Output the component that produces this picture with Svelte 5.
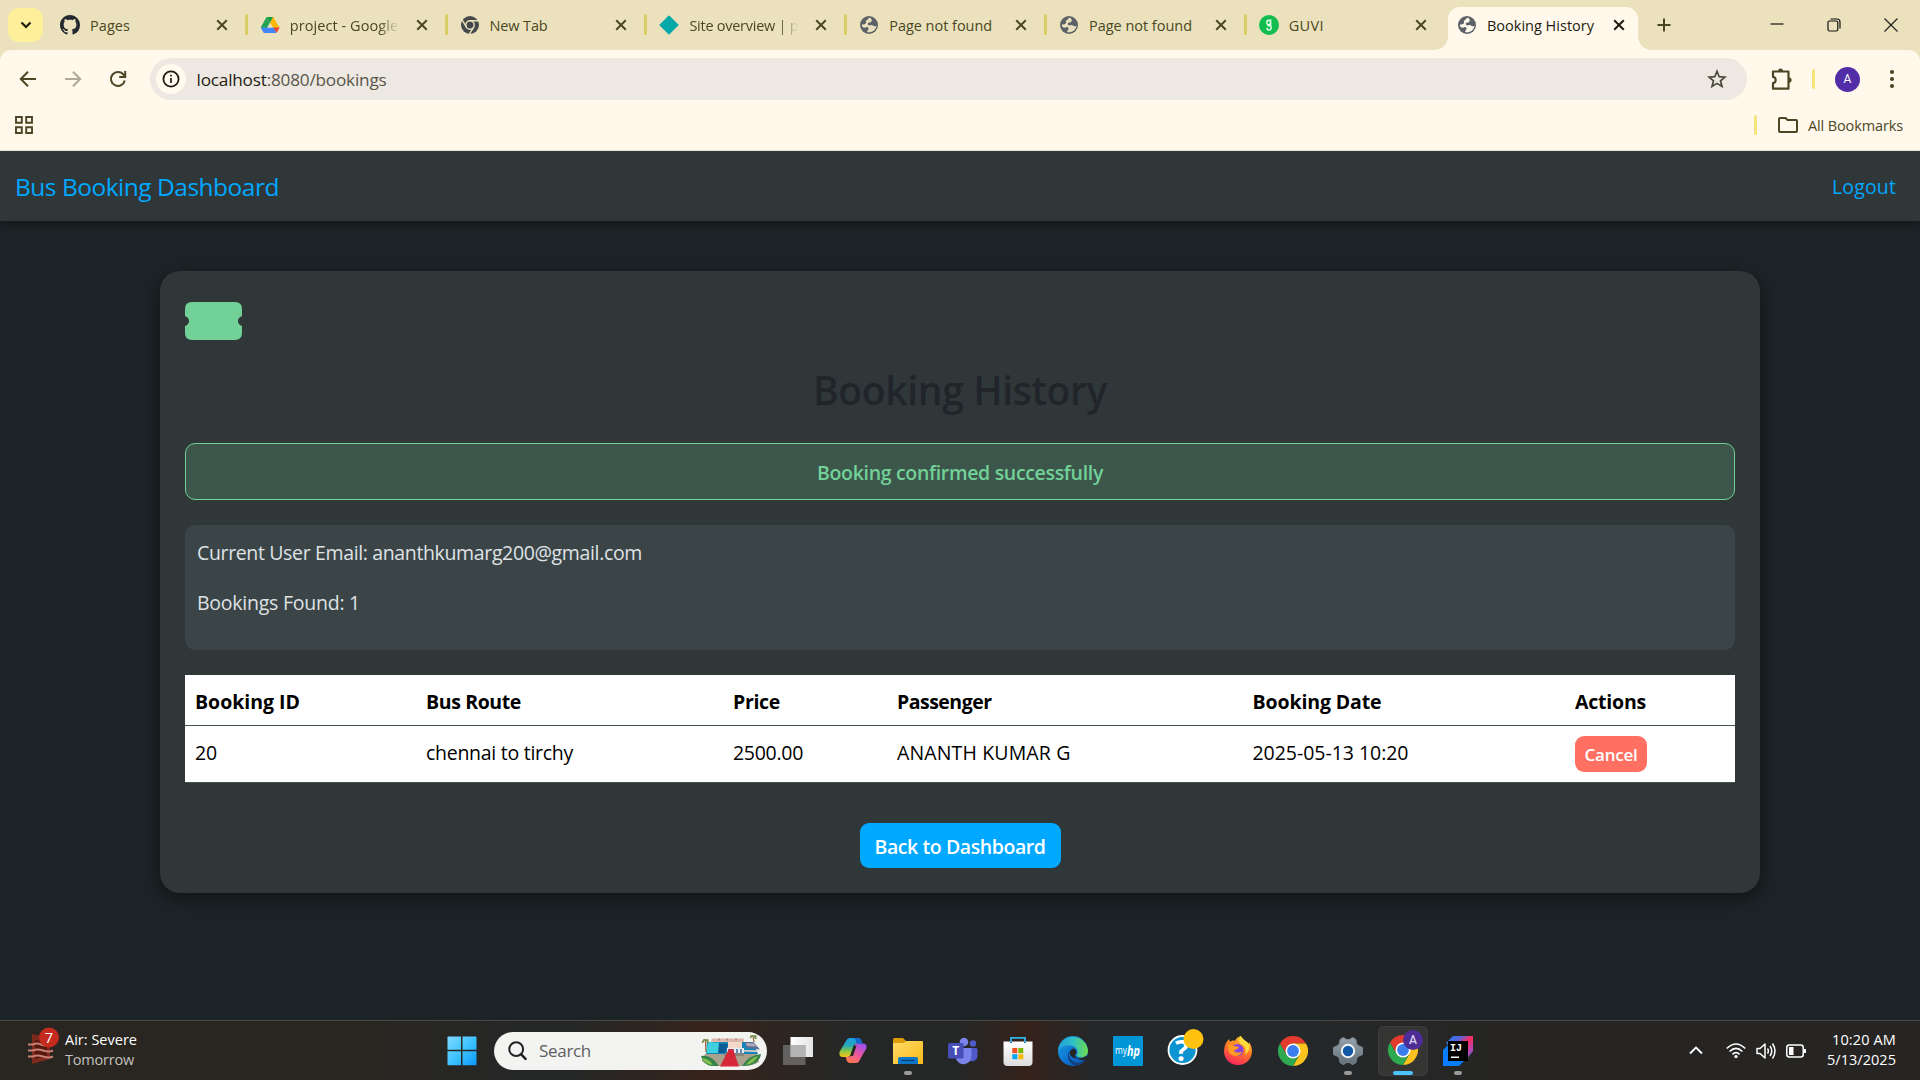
<script>
  const tabs = [
    { icon: 'github', title: 'Pages', width: 40 },
    { icon: 'drive', title: 'project - Google Drive', width: 148, fade: true },
    { icon: 'chromeMono', title: 'New Tab', width: 58 },
    { icon: 'diamond', title: 'Site overview | project', width: 146, fade: true },
    { icon: 'globe', title: 'Page not found', width: 103 },
    { icon: 'globe', title: 'Page not found', width: 103 },
    { icon: 'guvi', title: 'GUVI', width: 35 },
    { icon: 'globe', title: 'Booking History', width: 107, active: true }
  ];

  const columns = [
    { label: 'Booking ID', width: 105 },
    { label: 'Bus Route', width: 95 },
    { label: 'Price', width: 47 },
    { label: 'Passenger', width: 94.5 },
    { label: 'Booking Date', width: 129 },
    { label: 'Actions', width: 71 }
  ];
  const booking = [
    { value: '20', width: 22 },
    { value: 'chennai to tirchy', width: 147 },
    { value: '2500.00', width: 70 },
    { value: 'ANANTH KUMAR G', width: 173.5 },
    { value: '2025-05-13 10:20', width: 156 }
  ];

  const apps = [
    { icon: 'taskview' },
    { icon: 'copilot' },
    { icon: 'explorer', open: true },
    { icon: 'teams' },
    { icon: 'store' },
    { icon: 'edge' },
    { icon: 'myhp' },
    { icon: 'help' },
    { icon: 'firefox' },
    { icon: 'chrome' },
    { icon: 'settings', open: true },
    { icon: 'chromeProfile', focused: true },
    { icon: 'intellij', open: true }
  ];

  // Spreads letter spacing so that the label takes the given width.
  function fit(node, width) {
    const natural = node.getBoundingClientRect().width;
    node.style.letterSpacing = `${(width - natural) / node.textContent.length}px`;
  }
</script>

{#snippet chromeDisc()}
  <path fill="#e33b2e" d="M2 7.500A15 15 0 0 1 28 7.500H15L8.500 18.800z" />
  <path fill="#fcc31e" d="M15 7.500H28A15 15 0 0 1 15 30L21.500 18.800z" />
  <path fill="#2da94f" d="M15 30A15 15 0 0 1 2 7.500L8.500 18.800 15 22.500 21 19z" />
  <circle cx="15" cy="15" r="7.500" fill="#fff" />
  <circle cx="15" cy="15" r="5.900" fill="#3b7ded" />
{/snippet}

{#snippet favicon(name)}
  {#if name === 'github'}
    <svg width="20" height="20" viewBox="0 0 16 16"><path fill="#24292f" d="M8 0C3.580 0 0 3.580 0 8c0 3.540 2.290 6.530 5.470 7.590.4.070.55-.17.55-.38 0-.19-.01-.82-.01-1.490-2.010.37-2.530-.49-2.690-.94-.09-.23-.48-.94-.82-1.130-.28-.15-.68-.52-.01-.53.63-.01 1.080.58 1.230.82.72 1.210 1.870.87 2.330.66.070-.52.28-.87.51-1.070-1.780-.2-3.640-.89-3.640-3.950 0-.87.31-1.590.82-2.150-.08-.2-.36-1.020.08-2.120 0 0 .67-.21 2.200.82.64-.18 1.320-.27 2-.27s1.360.09 2 .27c1.530-1.040 2.200-.82 2.200-.82.44 1.100.16 1.920.08 2.120.51.56.82 1.270.82 2.150 0 3.070-1.870 3.750-3.650 3.950.29.25.54.73.54 1.480 0 1.070-.01 1.930-.01 2.200 0 .21.15.46.55.38A8.010 8.010 0 0 0 16 8c0-4.420-3.580-8-8-8z" /></svg>
  {:else if name === 'drive'}
    <svg width="20" height="20" viewBox="0 0 20 20">
      <path fill="#0f9d47" d="M6.600 2h6.800L10 8z" />
      <path fill="#23a455" d="M6.600 2 10 8 4.200 18 .8 12.300z" />
      <path fill="#fbb904" d="M13.400 2H13L10 8l3 5h6.600z" />
      <path fill="#ea4335" d="M13 12.500h6.700L16.500 18z" />
      <path fill="#4285f4" d="M.8 12.500h12.800L16.300 18H3.900z" />
      <path fill="#ebe2bd" d="m10 7.800 2.800 4.700H7.200z" />
    </svg>
  {:else if name === 'chromeMono'}
    <svg width="20" height="20" viewBox="0 0 20 20">
      <circle cx="10" cy="10" r="9" fill="#46494c" />
      <g fill="none" stroke="#ebe2bd" stroke-width="1.400">
        <circle cx="10" cy="10" r="4.200" />
        <path d="M10 5.800h8.500M6.400 12.100 2.100 4.800M13.600 12.100 9.300 19.300" />
      </g>
    </svg>
  {:else if name === 'diamond'}
    <svg width="20" height="20" viewBox="0 0 20 20"><path d="M10 1.200 18.800 10 10 18.800 1.200 10z" fill="#05a8a8" stroke="#05a8a8" stroke-width="1.500" stroke-linejoin="round" /></svg>
  {:else if name === 'globe'}
    <svg width="20" height="20" viewBox="0 0 20 20">
      <circle cx="10" cy="10" r="9" fill="#5d6268" />
      <path class="land" d="M10.800 2.800C8.300 3.600 8.900 5.500 6.800 5.700 7.800 8 6.500 8.800 5.200 9.300L2.700 9.700C3 12 5 13.300 6.700 12.400c2-1 3.300.2 2.700 1.800-.4 1.300-1.700 1.500-1.100 2.600.5.600 1.700.7 2.400.5 3.700-.5 6.300-3 6.800-6.500-2 1.300-3-.2-4.200-.6-1.900-.5-2.700.7-4.100-.1-1-.8-.5-2.300 1.200-2.500 1.500-.1 1.400-1.200 2.400-1.700.3-.8-.6-2.600-2-3.100z" />
    </svg>
  {:else}
    <svg width="20" height="20" viewBox="0 0 20 20">
      <circle cx="10" cy="10" r="10" fill="#13bd50" />
      <g fill="none" stroke="#e9ffef" stroke-width="1.400"><ellipse cx="9.700" cy="7.400" rx="1.900" ry="2.200" /><path d="M11.300 5.600 12.300 4.500M8.200 10.500h2.200a2.100 2.300 0 1 1-2.400 2.400M11.600 7v5" /></g>
    </svg>
  {/if}
{/snippet}

{#snippet appIcon(name)}
  {#if name === 'taskview'}
    <svg width="30" height="30" viewBox="0 0 30 30">
      <path d="M7.500 1H30v20H7.500z" fill="url(#tv)" />
      <path d="M0 9h22.500v20H0z" fill="#777" opacity=".75" />
      <path d="M7.500 9h15v12h-15z" fill="#b4b4b4" />
    </svg>
  {:else if name === 'copilot'}
    <svg width="30" height="30" viewBox="0 0 30 30">
      <path fill="url(#cpA)" d="M8 5C9 3 10 2 12 2h8c2 0 3 1.500 3.500 3l.7 2.500H19c-2 0-3 1-3.500 3L13 18c-.7 2-1.500 3-4 3H4.500C1.500 21 1 18 1.700 15.500z" />
      <path fill="url(#cpB)" d="M22 23.500c-1 2.500-2 3.500-4 3.500h-6c-2 0-3-1.500-3.500-3l-.9-3H10c2.200 0 3.300-1.500 4-4l2-6.500C16.700 8 17.500 7.500 19.500 7.500H25c3.500 0 4 2.500 3.300 5z" />
      <path fill="#262626" d="m15.800 9.500 2.700.2L15 20h-3z" />
      <path fill="#1467cf" d="M16 2h4c2 0 3 1.500 3.500 3l.7 2.500h-5.700C18 5 17.500 3 16 2z" />
    </svg>
  {:else if name === 'explorer'}
    <svg width="30" height="30" viewBox="0 0 30 30">
      <path fill="#e09b08" d="M0 3.500Q0 2 1.500 2H10l3 3v4H0z" />
      <path fill="url(#fold)" d="M0 7h10.500l3-2H29q1 0 1 1v22H0z" />
      <path fill="#0d76c8" d="M5 28v-5q0-2 2-2h16q2 0 2 2v5z" />
      <path stroke="#063f77" stroke-width="1.200" d="M8.500 24.500h13" />
    </svg>
  {:else if name === 'teams'}
    <svg width="30" height="30" viewBox="0 0 30 30">
      <circle cx="25" cy="7.500" r="3.200" fill="#5059c9" />
      <path fill="#5059c9" d="M20 12h8q1.500 0 1.500 1.500V20a5.500 5.500 0 0 1-9.500 3.500z" />
      <circle cx="16" cy="6" r="4.300" fill="#7b83eb" />
      <path fill="#7b83eb" d="M9 12h13q1.500 0 1.500 1.500V20a8 8 0 0 1-15.500 3z" />
      <rect x="0" y="7" width="15.500" height="15.500" rx="1.500" fill="#464eb8" />
      <text x="7.700" y="19" text-anchor="middle" class="glyph teams">T</text>
    </svg>
  {:else if name === 'store'}
    <svg width="30" height="30" viewBox="0 0 30 30">
      <path d="M8 6.500V1.800h14v4.700" fill="none" stroke="#2fb4ea" stroke-width="1.800" />
      <path fill="url(#bag)" d="M.5 5.500h29V26q0 4-4 4h-21q-4 0-4-4z" />
      <path d="M8 5.500v1.500M22 5.500v1.500" stroke="#1673a8" stroke-width="1.800" />
      <path fill="#f25022" d="M9.300 12h5v5.200h-5z" /><path fill="#7fba00" d="M15.300 12h5v5.200h-5z" />
      <path fill="#00a4ef" d="M9.300 18.200h5v5h-5z" /><path fill="#ffb900" d="M15.300 18.200h5v5h-5z" />
    </svg>
  {:else if name === 'edge'}
    <svg width="30" height="30" viewBox="0 0 30 30">
      <circle cx="15" cy="15" r="15" fill="url(#edA)" />
      <path fill="url(#edB)" d="M.8 11A15 15 0 0 1 30 15c0 4-3 6.500-6.500 6.500-3.500 0-5.500-1.500-5-2.700 2-2 1.500-8-5-9C8 9 3 10 .3 15z" />
      <path fill="#153f7a" d="M12.300 14c-3 5 0 11.500 6 12.500 3.800.5 7-.5 10-3A15 15 0 0 1 18 29.700C11 28 7 20 12.300 14z" />
      <path fill="#262626" d="M15 12.500c-3 1-4.300 4.500-2 7.500 3 3.500 10 3.300 14 .5q2-.5 2.500 0L28 23.500q-3 1-5 .5-4-.5-6-4c-.4-.5-.1-1 .5-1.500 1.700-2 1-5.500-2.500-6z" />
    </svg>
  {:else if name === 'myhp'}
    <svg width="30" height="30" viewBox="0 0 30 30">
      <rect width="30" height="30" rx="1" fill="#0096d6" />
      <text x="2" y="18" class="glyph my" textLength="12" lengthAdjust="spacingAndGlyphs">my</text>
      <text x="14" y="19.500" class="glyph hp" textLength="13" lengthAdjust="spacingAndGlyphs">hp</text>
    </svg>
  {:else if name === 'help'}
    <svg width="37" height="37" viewBox="0 0 37 37">
      <circle cx="15.500" cy="21" r="14" fill="#0b94d0" stroke="#fff" stroke-width="1.800" />
      <text x="15" y="31.500" text-anchor="middle" class="glyph question">?</text>
      <circle cx="26.500" cy="10" r="10" fill="#ffc20e" />
    </svg>
  {:else if name === 'firefox'}
    <svg width="30" height="30" viewBox="0 0 30 30">
      <path fill="url(#ff)" d="M15 29C7 29 1 23 1 15 1 10 3 6 6 3l1 3c1-1 3-2 5-1 1-2 2-4 6-5 0 4 5 4 7 9 1-1 1-2 1-3 2 3 3 6 3 9 0 8-6 14-14 14z" />
      <path fill="#ffdc3e" d="M18 0c-3 3-3 6 0 8 4 2 6 6 4 11 5-4 5-8 4-11-2-3-6-4-8-8z" />
      <circle cx="14.500" cy="14" r="6" fill="#8445df" />
      <path fill="#ff9a22" d="M5 9c3-1 5 0 6 1l5 1c-1 3-4 2-5 4 2 2 6 2 8 0-1 6-10 7-13 1-1-2-1-4-1-7z" />
    </svg>
  {:else if name === 'chrome'}
    <svg width="30" height="30" viewBox="0 0 30 30">{@render chromeDisc()}</svg>
  {:else if name === 'settings'}
    <svg width="30" height="30" viewBox="0 0 30 30">
      <path fill="url(#gear)" stroke="#7d8994" stroke-linejoin="round" d="m10.500 1.500 3 2h3l3-2 3.500 2 .3 3.500 1.700 2.500 4.500 2v7l-4.500 2-1.700 2.500-.3 3.500-3.500 2-3-2h-3l-3 2-3.500-2-.3-3.500L5 20.500.5 18.500v-7L5 9.500 6.700 7 7 3.500z" />
      <circle cx="15" cy="15" r="6.200" fill="#115aa8" stroke="#f5f5f5" stroke-width="2" />
    </svg>
  {:else if name === 'chromeProfile'}
    <svg width="36" height="36" viewBox="0 0 36 36">
      <g transform="translate(1 5)">{@render chromeDisc()}</g>
      <circle cx="26" cy="10" r="10" fill="#4e2c96" />
      <text x="26" y="14" text-anchor="middle" class="glyph badge">A</text>
    </svg>
  {:else}
    <svg width="30" height="30" viewBox="0 0 30 30">
      <path fill="#087cfa" d="M0 14 5 9 21 25l-5 5H0z" />
      <path fill="url(#ij)" d="M3 7 10 0h20v15l-8 10z" />
      <path fill="#000" d="M5 5h20v20H5z" />
      <text x="7" y="15.300" class="glyph ij">IJ</text>
      <path fill="#fff" d="M8 20.500h8v1.500H8z" />
    </svg>
  {/if}
{/snippet}

<svg class="defs" width="0" height="0" aria-hidden="true">
  <defs>
    <linearGradient id="tv"><stop stop-color="#fff" /><stop offset="1" stop-color="#e4e4e4" /></linearGradient>
    <linearGradient id="cpA" x2="0" y2="1"><stop stop-color="#1b9de8" /><stop offset=".4" stop-color="#27a9b8" /><stop offset=".7" stop-color="#8fc73f" /><stop offset="1" stop-color="#fbc417" /></linearGradient>
    <linearGradient id="cpB" x1=".8" x2=".2" y2="1"><stop stop-color="#9a50f2" /><stop offset=".5" stop-color="#e9569d" /><stop offset="1" stop-color="#ff7a4a" /></linearGradient>
    <linearGradient id="fold" x2="1" y2="1"><stop stop-color="#ffdc68" /><stop offset="1" stop-color="#fbb917" /></linearGradient>
    <linearGradient id="bag" x2="0" y2="1"><stop stop-color="#fff" /><stop offset="1" stop-color="#dcdcdc" /></linearGradient>
    <linearGradient id="edA" x2="1" y2="1"><stop stop-color="#1ba0e0" /><stop offset=".6" stop-color="#0c6fd0" /><stop offset="1" stop-color="#0c4a96" /></linearGradient>
    <linearGradient id="edB"><stop stop-color="#1f9ede" /><stop offset=".5" stop-color="#31c0c6" /><stop offset="1" stop-color="#6cdc4c" /></linearGradient>
    <linearGradient id="ff" x1=".7" x2=".3" y2="1"><stop stop-color="#ffc92e" /><stop offset=".45" stop-color="#ff7a26" /><stop offset="1" stop-color="#f5225e" /></linearGradient>
    <linearGradient id="gear" x2="0" y2="1"><stop stop-color="#96a1aa" /><stop offset="1" stop-color="#626f7a" /></linearGradient>
    <linearGradient id="ij" x2="1" y2="1"><stop stop-color="#1180f8" /><stop offset=".3" stop-color="#5f62d8" /><stop offset=".5" stop-color="#ff2a5c" /><stop offset=".75" stop-color="#b348b8" /><stop offset="1" stop-color="#3f6cf0" /></linearGradient>
    <linearGradient id="win" x2="1" y2="1"><stop stop-color="#80dbff" /><stop offset=".5" stop-color="#3fc3ff" /><stop offset="1" stop-color="#0a98f8" /></linearGradient>
  </defs>
</svg>

<div class="screen">
  <header class="strip">
    <button class="search-tabs" aria-label="Search tabs">
      <svg width="12" height="8" viewBox="0 0 12 8"><path d="m1.500 1.500 4.500 4.500 4.500-4.500" fill="none" stroke="#1e1c0c" stroke-width="2.200" /></svg>
    </button>
    <div class="tabs">
      {#each tabs as tab, i}
        <div class="tab" class:active={tab.active} class:divided={i > 0 && !tab.active}>
          {@render favicon(tab.icon)}
          <div class="title" class:fade={tab.fade}><span use:fit={tab.width}>{tab.title}</span></div>
          <svg width="12" height="12" viewBox="0 0 12 12"><path d="m1.200 1.200 9.600 9.600m0-9.600-9.600 9.600" stroke="currentColor" stroke-width="2" /></svg>
        </div>
      {/each}
    </div>
    <svg class="plus" width="14" height="14" viewBox="0 0 14 14"><path d="M7 .5v13M.5 7h13" stroke="#4a4724" stroke-width="2" /></svg>
    <div class="controls">
      <svg width="14" height="14" viewBox="0 0 14 14"><path d="M.5 6h13" stroke="#111" stroke-width="1.200" /></svg>
      <svg width="14" height="14" viewBox="0 0 14 14" fill="none" stroke="#111" stroke-width="1.200"><rect x="1" y="3" width="9.800" height="10" rx="1.500" /><path d="M3.500 1H10q3 0 3 3v6.500" /></svg>
      <svg width="14" height="14" viewBox="0 0 14 14"><path d="m.5.5 13 13m0-13-13 13" stroke="#222" stroke-width="1.200" /></svg>
    </div>
  </header>

  <div class="toolbar">
    <div class="nav">
      <svg width="20" height="20" viewBox="0 0 20 20" fill="none" stroke="#4a4724" stroke-width="2"><path d="M18 10H3M10 2.800 2.800 10l7.200 7.200" /></svg>
      <svg width="20" height="20" viewBox="0 0 20 20" fill="none" stroke="#adab98" stroke-width="2"><path d="M2 10h15M10 2.800l7.200 7.200-7.200 7.200" /></svg>
      <svg width="20" height="20" viewBox="0 0 20 20" fill="none" stroke="#4a4724" stroke-width="2"><path d="M16.800 11.500A7 7 0 1 1 15.500 5.600L17 7.300" /><path d="M17.200 2v6h-6" /></svg>
    </div>
    <div class="omnibox">
      <div class="info"><svg width="18" height="18" viewBox="0 0 18 18"><circle cx="9" cy="9" r="7.600" fill="none" stroke="#1e1c14" stroke-width="1.800" /><path d="M9 8v5M9 4.800v1.700" stroke="#1e1c14" stroke-width="1.700" /></svg></div>
      <div class="url"><span use:fit={190}><b>localhost</b>:8080/bookings</span></div>
      <svg width="20" height="20" viewBox="0 0 20 20"><path fill="none" stroke="#4a483c" stroke-width="1.700" d="m10 2.300 2.200 5.400 5.800.4-4.500 3.700 1.500 5.700-5-3.100-5 3.100 1.500-5.700L2 8.100l5.800-.4z" /></svg>
    </div>
    <svg class="puzzle" width="22" height="24" viewBox="0 0 22 24"><path fill="none" stroke="#4a4724" stroke-width="2.200" stroke-linejoin="round" d="M2 4.500h15.500v17.200H2v-5.500c3.500-.3 3.500-6 0-6.300z" /><path fill="#4a4724" d="M7 4a2.500 2.500 0 0 1 5 0zM18 10.500a2.600 2.600 0 0 1 0 5.200z" /></svg>
    <i class="rule"></i>
    <div class="avatar">A</div>
    <svg class="more" width="6" height="22" viewBox="0 0 6 22" fill="#4a4724"><circle cx="3" cy="4" r="2.100" /><circle cx="3" cy="11" r="2.100" /><circle cx="3" cy="18" r="2.100" /></svg>
  </div>

  <div class="bookmarks">
    <svg width="18" height="18" viewBox="0 0 18 18" fill="none" stroke="#4a4724" stroke-width="1.900"><path d="M1 1h5.800v5.800H1zM11.200 1H17v5.800h-5.800zM1 11.200h5.800V17H1zM11.200 11.200H17V17h-5.800z" /></svg>
    <div class="all">
      <i class="rule"></i>
      <svg width="20" height="16" viewBox="0 0 20 16"><path fill="none" stroke="#4a4724" stroke-width="2" stroke-linejoin="round" d="M1 2q0-1 1-1h5.500l2 2H18q1 0 1 1v10q0 1-1 1H2q-1 0-1-1z" /></svg>
      <span use:fit={95}>All Bookmarks</span>
    </div>
  </div>

  <main>
    <nav>
      <a class="brand" href="#top"><span use:fit={264}>Bus Booking Dashboard</span></a>
      <a href="#logout"><span use:fit={64}>Logout</span></a>
    </nav>
    <section class="card">
      <svg class="ticket" width="57" height="38" viewBox="0 0 57 38"><path fill="#72d197" d="M7 0h43q7 0 7 7v7q-4 1.500-4 5t4 5v7q0 7-7 7H7q-7 0-7-7v-7q4-1.500 4-5t-4-5V7q0-7 7-7z" /></svg>
      <h1><span use:fit={294}>Booking History</span></h1>
      <div class="alert"><span use:fit={286}>Booking confirmed successfully</span></div>
      <div class="summary">
        <p><span use:fit={445}>Current User Email: ananthkumarg200@gmail.com</span></p>
        <p><span use:fit={163}>Bookings Found: 1</span></p>
      </div>
      <div class="table">
        <div class="row head">
          {#each columns as col}<div><span use:fit={col.width}>{col.label}</span></div>{/each}
        </div>
        <div class="row">
          {#each booking as cell}<div><span use:fit={cell.width}>{cell.value}</span></div>{/each}
          <div><button class="cancel"><span use:fit={53}>Cancel</span></button></div>
        </div>
      </div>
      <button class="back"><span use:fit={171}>Back to Dashboard</span></button>
    </section>
  </main>

  <footer>
    <div class="weather">
      <svg width="32" height="38" viewBox="0 0 32 38">
        <path fill="#7b2a1c" d="m4 7 18 4v21L4 37z" /><path fill="#55180f" d="m7 13 12 2v14L7 32z" />
        <path fill="none" stroke="#c98073" stroke-width="2" d="M0 17.500h5q4-2 8 0t8 0M0 23.500h5q4-2 10 0t10 0M0 29.500h5q4-2 10 0t10 0" />
        <circle cx="21" cy="10.500" r="10" fill="#c42b1c" /><text x="21" y="16" text-anchor="middle" class="glyph count">7</text>
      </svg>
      <div class="forecast"><div><span use:fit={72}>Air: Severe</span></div><div class="dim"><span use:fit={69}>Tomorrow</span></div></div>
    </div>
    <div class="dock">
      <svg class="start" width="30" height="30" viewBox="0 0 30 30"><path fill="url(#win)" d="M1 .5h13v13.300H.5V1zM15.500.5H29l.5.5v12.800h-14zM.5 15.300H14v14H1l-.5-.5zM15.500 15.300h14v13.500l-.5.5H15.500z" /></svg>
      <div class="search">
        <svg width="19" height="20" viewBox="0 0 19 20"><circle cx="8.200" cy="8.200" r="6.900" fill="none" stroke="#222" stroke-width="2" /><path d="m13 13.200 4.500 4.700" stroke="#222" stroke-width="2.500" stroke-linecap="round" /></svg>
        <span use:fit={52}>Search</span>
        <svg class="scene" width="62" height="34" viewBox="0 0 62 34">
          <path fill="#aaa08e" d="M5 20h52l2 8q-6 4-15 4H18Q7 32 2 27z" />
          <path fill="#1685ba" d="M7 8h46l5 12H6z" /><path fill="#3dd0df" d="m8 8 15 1-4 10H6z" /><path fill="#0c5c93" d="m19 9 9 1-3 9h-7z" />
          <path fill="#dcb9ab" d="M12 4.500h32V8H11z" /><path stroke="#846677" d="M19 4.500v2M27 4.500v2M36 4.500v2" />
          <path fill="#5d6f96" d="m45 8 9 .5 6 7-13-1.500z" /><path fill="#b9a9b5" d="m46 9 8 .5 3 3-10-.5z" />
          <path fill="#f4d8c8" d="M28 8h14v6H28zM43 16l16 .5-1 1.500-15-.5z" /><path fill="#e6eaf2" d="M27 14h17v5H27z" />
          <path stroke="#2f6ba0" stroke-width="1.500" d="M29 15v4M33 15v4M37 15v4M41 15v4" />
          <path fill="#8b8377" d="M25 19h18l1 3H24z" />
          <path fill="#d72739" d="M29 15h4l6 17.500H20z" />
          <path fill="#33824a" d="M1 22q8-1 14 5l4 5H11Q3 30 1 22zM61 20q-12 1-19 12 17 0 19-12z" /><path fill="#80bd4f" d="M2 24q8 1 11 7-8 0-11-7zM58 22q-8 2-12 9 9-2 12-9z" />
          <path fill="none" stroke="#96693b" stroke-width="1.300" d="M6 18 5.500 7M54 8l-.8-5" /><path fill="none" stroke="#6f8a40" stroke-width="1.700" d="M2.500 9Q3 5.500 5.500 6T8 9M50.500 4q.5-3 3-2t2.500 3M3 6h5.500M50.500 2h6" />
        </svg>
      </div>
      {#each apps as app}
        <div class="app" class:focused={app.focused} class:open={app.open} class:badged={app.icon === 'help'}>{@render appIcon(app.icon)}</div>
      {/each}
    </div>
    <div class="tray">
      <svg width="14" height="9" viewBox="0 0 14 9"><path d="M1 7.500 7 1.500l6 6" fill="none" stroke="#fff" stroke-width="1.800" /></svg>
      <svg class="wifi" width="20" height="16" viewBox="0 0 20 16" fill="none" stroke="#fff" stroke-width="1.600"><path d="M.7 5.500q9.300-9 18.600 0M3.600 8.500q6.400-6.200 12.800 0M6.400 11.300q3.600-3.400 7.200 0" /><circle cx="10" cy="13.600" r="1.700" fill="#fff" stroke="none" /></svg>
      <svg width="20" height="18" viewBox="0 0 20 18" fill="none" stroke="#fff" stroke-width="1.500"><path stroke-linejoin="round" d="M1 6.500h3L9 2v14l-5-4.500H1zM11.500 6.500q1.800 2.500 0 5M14 4q3.500 5 0 10M16.500 1.500q5 7.500 0 15" /></svg>
      <svg width="20" height="14" viewBox="0 0 20 14"><rect x=".8" y="1" width="16.400" height="12" rx="2.500" fill="none" stroke="#fff" stroke-width="1.500" /><path fill="#fff" d="M3 3h4.500v8H3zM18 5h1.500q.5 0 .5.500v3q0 .5-.5.500H18z" /></svg>
      <div class="clock"><div><span use:fit={64}>10:20 AM</span></div><div><span use:fit={69}>5/13/2025</span></div></div>
    </div>
  </footer>
</div>

<style>
  :global(body) { margin: 0; overflow: hidden; }
  .screen { width: 1920px; height: 1080px; display: flex; flex-direction: column; font-family: "Open Sans", "Noto Sans", sans-serif; font-size: 14.500px; background: #ebe2bd; overflow: hidden; }
  .screen :global(svg) { display: block; flex: none; }
  .defs { position: absolute; }
  span { white-space: nowrap; display: inline-block; }
  button { border: 0; font: inherit; padding: 0; display: flex; align-items: center; justify-content: center; }
  a { text-decoration: none; }

  .strip { height: 50px; display: flex; align-items: center; padding-left: 8px; flex: none; box-sizing: border-box; color: #4a4724; }
  .search-tabs { width: 35px; height: 34px; border-radius: 11px; background: #fef09a; margin-right: 3px; }
  .tabs { display: flex; height: 50px; }
  .tab { position: relative; width: 199.800px; box-sizing: border-box; display: flex; align-items: center; padding: 0 18px 0 14px; }
  .tab.divided::before { content: ""; position: absolute; left: -1px; top: 14px; width: 3px; height: 21px; border-radius: 2px; background: #d8cc66; }
  .tab.active { width: 190px; height: 43px; margin: 7px 0 0 3.400px; padding: 0 13px 7px 9px; background: #fff8eb; border-radius: 12px 12px 0 0; color: #1e1c10; }
  .tab.active::before, .tab.active::after { content: ""; position: absolute; bottom: 0; width: 13px; height: 13px; }
  .tab.active::before { left: -13px; background: radial-gradient(circle at 0 0, transparent 12.500px, #fff8eb 13px); }
  .tab.active::after { right: -13px; background: radial-gradient(circle at 100% 0, transparent 12.500px, #fff8eb 13px); }
  .title { flex: 1; margin: 0 12px 0 10px; overflow: hidden; line-height: 24px; padding-top: 2px; white-space: nowrap; }
  .title.fade { mask-image: linear-gradient(90deg, #000 82%, transparent); margin-right: 0; flex: none; width: 109px; }
  .title.fade + :global(svg) { margin-left: auto; }
  .land { fill: #ebe2bd; }
  .active .land { fill: #fff8eb; }
  .plus { margin-left: 19px; }
  .controls { margin-left: auto; display: flex; gap: 43px; padding-right: 22px; }

  .toolbar { height: 58px; flex: none; background: #fff8eb; border-radius: 11px 11px 0 0; display: flex; align-items: center; }
  .nav { display: flex; gap: 25px; width: 150px; padding-left: 18px; box-sizing: border-box; }
  .omnibox { width: 1597px; height: 42px; box-sizing: border-box; border-radius: 21px; background: #ede8e1; display: flex; align-items: center; padding: 0 20px 0 6px; }
  .info { width: 30px; height: 30px; border-radius: 50%; background: #fffaee; display: grid; place-items: center; }
  .url { flex: 1; margin-left: 10.500px; font-size: 17.200px; color: #5a564d; line-height: 26px; padding-top: 1px; }
  .url b { font-weight: 400; color: #1e1c14; }
  .puzzle { margin-left: 24px; }
  .rule { display: block; width: 3px; height: 20px; border-radius: 2px; background: #f3e57b; }
  .toolbar .rule { margin-left: 19px; }
  .avatar { width: 25px; height: 25px; margin-left: 20px; border-radius: 50%; background: #512da8; color: #fff; font: 12px/25px Roboto, sans-serif; text-align: center; }
  .more { margin-left: 29px; }
  .bookmarks { height: 42px; flex: none; border-bottom: 1px solid #e8e2cc; background: #fff8eb; display: flex; align-items: center; justify-content: space-between; padding: 0 17px 8px 15px; color: #4a4724; box-sizing: border-box; height: 43px; }
  .all { display: flex; align-items: center; }
  .all svg { margin: 0 10px 0 21px; }

  main { height: 869px; flex: none; background: #1d2427; overflow: hidden; font-size: 19.500px; }
  nav { height: 70px; background: #2f3739; display: flex; align-items: center; justify-content: space-between; padding: 0 24px 0 15px; box-shadow: 0 2px 10px rgba(0, 0, 0, .5); box-sizing: border-box; }
  nav a { color: #00a8ff; }
  .brand { font-size: 24.500px; }
  .card { width: 1600px; height: 622px; margin: 50px auto 0; box-sizing: border-box; padding: 31px 25px 25px; background: #2f3739; border-radius: 20px; box-shadow: 0 5px 20px rgba(0, 0, 0, .5); display: flex; flex-direction: column; }
  h1 { margin: 26px 0 0; font-size: 39px; font-weight: 600; line-height: 48px; text-align: center; color: #212529; }
  .alert { margin-top: 29px; height: 57px; box-sizing: border-box; border: 1px solid #72d197; border-radius: 10px; background: #3c564c; color: #72d197; font-weight: 600; line-height: 57px; text-align: center; }
  .summary { margin-top: 25px; height: 125px; box-sizing: border-box; padding: 13px 12px; border-radius: 10px; background: #3b4547; color: #dfe2e5; }
  .summary p { margin: 0 0 20px; line-height: 30px; }
  .table { margin-top: 25px; background: #fff; color: #000; height: 108px; flex: none; }
  .row { display: grid; grid-template-columns: 231px 307px 164px 355.500px 322.500px 1fr; padding-left: 10px; height: 56px; line-height: 53px; border-bottom: 1px solid #46544f; }
  .row.head { height: 50px; font-weight: 700; line-height: 53px; }
  .cancel { width: 72px; height: 36px; margin-top: 10px; border-radius: 9px; background: #ff7062; color: #fff; font-size: 17px; font-weight: 600; line-height: 37px; padding-top: 1px; }
  .back { width: 201px; height: 45px; margin: 40px auto 0; border-radius: 9px; background: #00a8ff; color: #fff; font-weight: 600; line-height: 45px; padding-top: 2px; }

  footer { height: 60px; flex: none; box-sizing: border-box; border-top: 1px solid #4a4a46; background: linear-gradient(90deg, #292621 0, #292621 19%, #252726 27%, #252726 30%, #37231b 37%, #252726 44%, #252726 50%, #35221a 53.500%, #24282a 57%, #25282a 68%, #262523 78%); display: flex; align-items: center; color: #fff; }
  .weather { display: flex; align-items: center; width: 434px; padding-left: 28px; box-sizing: border-box; line-height: 20px; }
  .weather > svg { margin: -9px 5px 0 0; }
  .forecast { padding-bottom: 2px; }
  .dim { color: #c3c1be; }
  .dock { display: flex; align-items: center; height: 59px; }
  .start { margin-left: 13px; }
  .search { width: 273px; height: 38px; margin: 0 3px 0 17px; border-radius: 19px; background: #f3f3f2; color: #5e5e5e; font-size: 17px; line-height: 38px; display: flex; align-items: center; padding: 0 5px 0 14px; box-sizing: border-box; }
  .search span { margin-left: 12px; }
  .scene { margin-left: auto; }
  .app { position: relative; width: 50px; height: 50px; margin: 0 2.500px; border-radius: 6px; display: grid; place-items: center; flex: none; }
  .badged { padding: 0 0 6px 5px; box-sizing: border-box; }
  .focused { background: #353534; box-shadow: inset 0 0 0 1px #3d3d3c; padding: 0 0 5px 4px; box-sizing: border-box; }
  .open::after, .focused::after { content: ""; position: absolute; left: 21px; bottom: 1px; width: 8px; height: 4px; border-radius: 2px; background: #999; }
  .focused::after { left: 15px; width: 20px; background: #4cc2ff; }
  .tray { margin-left: auto; display: flex; align-items: center; padding-right: 24px; gap: 10px; }
  .wifi { margin-left: 13px; }
  .clock { width: 80px; text-align: right; line-height: 20px; padding-bottom: 2px; }

  .glyph { fill: #fff; font-family: "Open Sans", sans-serif; }
  .teams { font-size: 12px; font-weight: 700; }
  .my { font-size: 10px; }
  .hp { font-size: 15px; font-weight: 700; font-style: italic; }
  .question { font-size: 29px; font-weight: 700; }
  .badge { font: 500 12px Roboto, sans-serif; fill: #d8cdf0; }
  .ij { font: 700 10px "Liberation Mono", monospace; }
  .count { font-size: 14.500px; }
</style>
